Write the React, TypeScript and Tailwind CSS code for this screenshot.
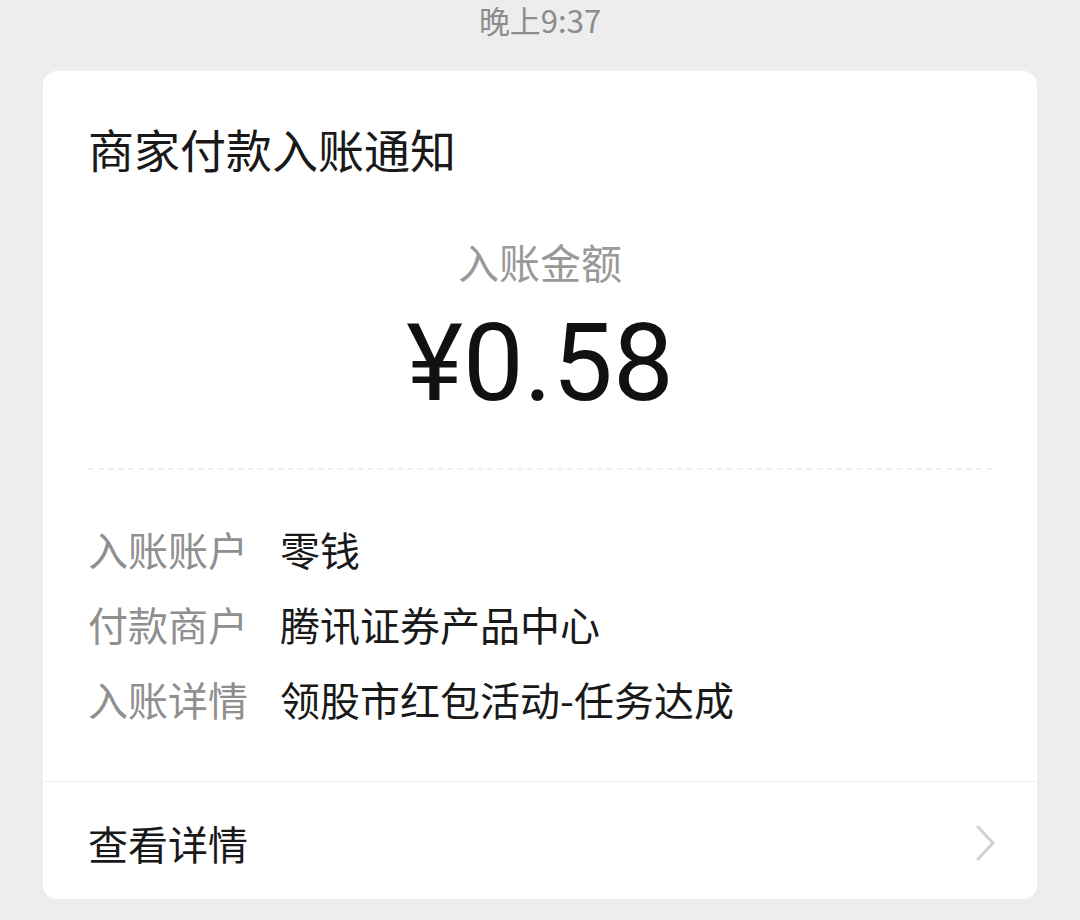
const cjk = { fontFamily: '"Noto Sans CJK SC", "Noto Sans", sans-serif' };

const rows = [
  { label: '入账账户', value: '零钱' },
  { label: '付款商户', value: '腾讯证券产品中心' },
  { label: '入账详情', value: '领股市红包活动-任务达成' },
];

export default function App() {
  return (
    <div className="min-h-[920px] w-[1080px] bg-[#ededed]" style={cjk}>
      {/* time stamp */}
      <div className="flex h-[71px] justify-center pt-[3px]">
        <span className="text-[31px] leading-[34px] text-[#8c8c8c]">晚上9:37</span>
      </div>

      {/* notice card */}
      <div className="mx-[43px] w-[994px] rounded-[14px] bg-white">
        <div className="px-[45px] pt-[49px]">
          <h1 className="text-[46px] leading-[56px] text-[#191919]">商家付款入账通知</h1>
        </div>

        <div className="mt-[61px] text-center text-[41px] leading-[48px] text-[#999999]">入账金额</div>
        <div
          className="mt-[18px] text-center text-[108px] leading-[120px] text-[#111111]"
          style={{ fontFamily: 'Roboto, "Noto Sans", sans-serif' }}
        >
          ¥0.58
        </div>

        <div className="mx-[45px] mt-[45px] border-t-2 border-dashed border-[#efefef]" />

        <div className="px-[45px] pt-[41px] pb-[45px]">
          {rows.map((r) => (
            <div key={r.label} className="flex h-[75px] items-center text-[40px]">
              <span className="w-[192px] shrink-0 text-[#8f8f8f]">{r.label}</span>
              <span className="text-[#191919]">{r.value}</span>
            </div>
          ))}
        </div>

        <div className="border-t border-[#ededed]" />

        <div className="flex h-[117px] items-center justify-between pl-[45px] pr-[40px] pt-1">
          <span className="text-[40px] text-[#191919]">查看详情</span>
          <svg width="22" height="38" viewBox="0 0 22 38" fill="none">
            <path d="M3 3 L18 19 L3 35" stroke="#d2d2d2" strokeWidth="3" strokeLinecap="round" strokeLinejoin="round" />
          </svg>
        </div>
      </div>
    </div>
  );
}
